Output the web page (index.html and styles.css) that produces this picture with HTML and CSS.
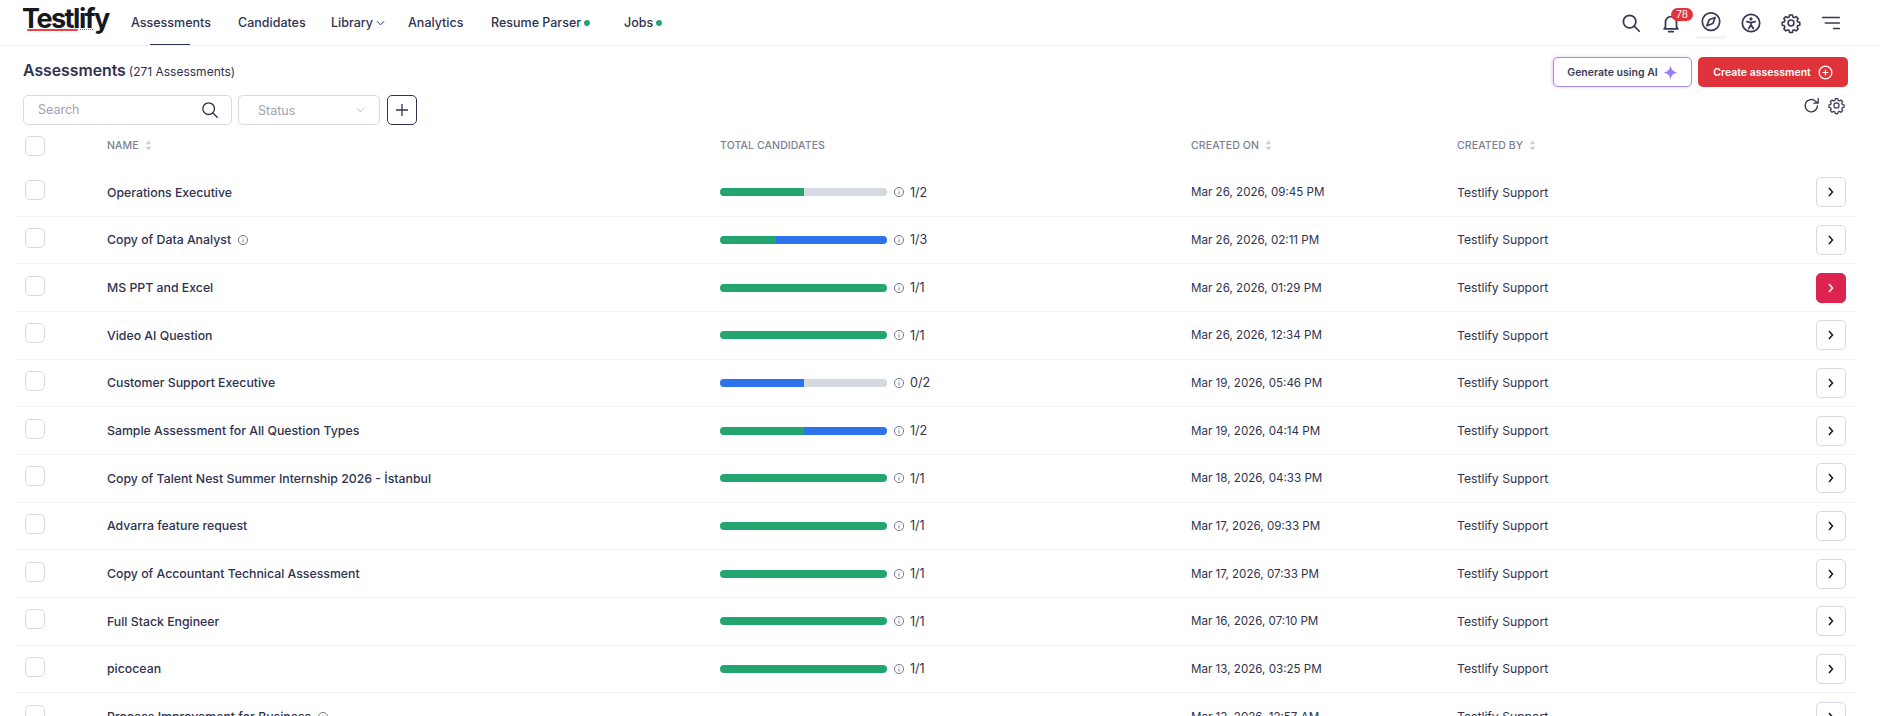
FILE: index.html
```html
<!DOCTYPE html>
<html lang="en">
<head>
<meta charset="utf-8">
<title>Testlify - Assessments</title>
<link rel="stylesheet" href="styles.css">
</head>
<body>
<header class="topbar">
  <div class="logo"><span class="logo-word">Testlify</span><span class="logo-line"></span><span class="logo-dots"></span></div>
  <nav class="nav">
    <a class="nav-item n1 active">Assessments</a>
    <a class="nav-item n2">Candidates</a>
    <a class="nav-item n3">Library <svg class="chev" viewBox="0 0 10 6"><path d="M1 1l4 4 4-4"/></svg></a>
    <a class="nav-item n4">Analytics</a>
    <a class="nav-item n5">Resume Parser <i class="dot"></i></a>
    <a class="nav-item n6">Jobs <i class="dot"></i></a>
  </nav>
  <div class="top-icons">
    <svg class="ti" viewBox="0 0 24 24"><circle cx="10.5" cy="10.5" r="6.8"/><path d="M15.5 15.5L21 21"/></svg>
    <span class="bell-wrap">
      <svg class="ti" viewBox="0 0 24 24"><path d="M6 16.500V11a6 6 0 0 1 12 0v5.500l1.500 2h-15z"/><path d="M9.500 21.500h5"/></svg>
      <span class="badge">78</span>
    </span>
    <span class="compass-wrap">
      <svg class="ti" viewBox="0 0 24 24"><circle cx="12" cy="10.500" r="9.500"/><path d="M16.500 6l-2.500 6.500-6.500 2.500 2.500-6.500z"/></svg>
    </span>
    <svg class="ti" viewBox="0 0 24 24"><circle cx="12" cy="12" r="9.500"/><circle cx="12" cy="7.500" r=".8" class="fill"/><path d="M7.500 10.500l4.500 1 4.500-1M12 11.500V14l-2.500 4M12 14l2.500 4"/></svg>
    <svg class="ti" viewBox="0 0 24 24"><use href="#gear"/></svg>
    <svg class="ti" viewBox="0 0 24 24"><path d="M3 6h18M6 12h15M15 18h6"/></svg>
  </div>
</header>

<svg class="defs" aria-hidden="true"><defs>
  <path id="gear" d="M10.300 3h3.400l.5 2.400 1.800.8 2.100-1.300 2.400 2.400-1.300 2.100.8 1.800 2.400.5v3.400l-2.400.5-.8 1.800 1.300 2.100-2.400 2.400-2.100-1.300-1.800.8-.5 2.400h-3.400l-.5-2.400-1.800-.8-2.100 1.300-2.400-2.400 1.300-2.100-.8-1.800-2.400-.5v-3.400l2.400-.5.800-1.800-1.300-2.100 2.400-2.400 2.100 1.300 1.800-.8zM12 9a3.500 3.500 0 1 0 0 7 3.500 3.500 0 0 0 0-7z" transform="translate(12 12) scale(.92) translate(-12 -12.500)"/>
  <g id="info"><circle cx="6" cy="6" r="4.600"/><path d="M6 5.500v3M6 3.400v.8"/></g>
</defs></svg>

<main class="page">
  <section class="title-row">
    <h1 class="title">Assessments <span class="count">(271 Assessments)</span></h1>
    <div class="actions">
      <button class="btn-ai">Generate using AI
        <svg class="spark" viewBox="0 0 16 16"><path d="M8 .5c.9 4.500 2.600 6.500 7.500 7.500-4.900 1-6.600 3-7.500 7.500C7.100 11 5.400 9 .5 8 5.400 7 7.100 5 8 .5z"/></svg>
      </button>
      <button class="btn-create">Create assessment
        <svg class="plus-c" viewBox="0 0 16 16"><circle cx="8" cy="8" r="6.800"/><path d="M8 4.800v6.400M4.800 8h6.400"/></svg>
      </button>
    </div>
  </section>

  <section class="toolbar">
    <div class="filters">
      <label class="search"><span class="ph ph-up">Search</span>
        <svg class="search-ic" viewBox="0 0 20 20"><circle cx="8.500" cy="8.500" r="6.500"/><path d="M13.300 13.300L18.500 18.500"/></svg>
      </label>
      <div class="status"><span class="ph">Status</span>
        <svg class="status-chev" viewBox="0 0 10 6"><path d="M1 1l4 4 4-4"/></svg>
      </div>
      <button class="add"><svg viewBox="0 0 16 16"><path d="M8 2v12M2 8h12"/></svg></button>
    </div>
    <div class="tools">
      <svg class="tool" viewBox="0 0 24 24"><path d="M19.500 12.500A7.800 7.800 0 1 1 17 6.500L20 9M20.500 3.500V9H15"/></svg>
      <svg class="tool" viewBox="0 0 24 24"><use href="#gear"/></svg>
    </div>
  </section>

  <section class="table">
    <div class="row head">
      <span class="check"></span>
      <span class="th">NAME <svg class="sort" viewBox="0 0 8 12"><path d="M4 0l3.500 4.500h-7zM4 12L.500 7.500h7z"/></svg></span>
      <span class="th">TOTAL CANDIDATES</span>
      <span class="th">CREATED ON <svg class="sort" viewBox="0 0 8 12"><path d="M4 0l3.500 4.500h-7zM4 12L.500 7.500h7z"/></svg></span>
      <span class="th">CREATED BY <svg class="sort" viewBox="0 0 8 12"><path d="M4 0l3.500 4.500h-7zM4 12L.500 7.500h7z"/></svg></span>
      <span></span>
    </div>

    <div class="row">
      <span class="check"></span><span class="name">Operations Executive</span>
      <span class="cand"><span class="bar"><i class="g w50"></i><i class="e"></i></span><svg class="info" viewBox="0 0 12 12"><use href="#info"/></svg><span>1/2</span></span>
      <span class="cell date">Mar 26, 2026, 09:45 PM</span><span class="cell">Testlify Support</span>
      <button class="go"><svg viewBox="0 0 8 10"><path d="M2 1l3.500 4L2 9"/></svg></button>
    </div>
    <div class="row">
      <span class="check"></span><span class="name">Copy of Data Analyst <svg class="info" viewBox="0 0 12 12"><use href="#info"/></svg></span>
      <span class="cand"><span class="bar"><i class="g w33"></i><i class="b"></i></span><svg class="info" viewBox="0 0 12 12"><use href="#info"/></svg><span>1/3</span></span>
      <span class="cell date">Mar 26, 2026, 02:11 PM</span><span class="cell">Testlify Support</span>
      <button class="go"><svg viewBox="0 0 8 10"><path d="M2 1l3.500 4L2 9"/></svg></button>
    </div>
    <div class="row">
      <span class="check"></span><span class="name">MS PPT and Excel</span>
      <span class="cand"><span class="bar"><i class="g w100"></i></span><svg class="info" viewBox="0 0 12 12"><use href="#info"/></svg><span>1/1</span></span>
      <span class="cell date">Mar 26, 2026, 01:29 PM</span><span class="cell">Testlify Support</span>
      <button class="go hot"><svg viewBox="0 0 8 10"><path d="M2 1l3.500 4L2 9"/></svg></button>
    </div>
    <div class="row">
      <span class="check"></span><span class="name">Video AI Question</span>
      <span class="cand"><span class="bar"><i class="g w100"></i></span><svg class="info" viewBox="0 0 12 12"><use href="#info"/></svg><span>1/1</span></span>
      <span class="cell date">Mar 26, 2026, 12:34 PM</span><span class="cell">Testlify Support</span>
      <button class="go"><svg viewBox="0 0 8 10"><path d="M2 1l3.500 4L2 9"/></svg></button>
    </div>
    <div class="row">
      <span class="check"></span><span class="name">Customer Support Executive</span>
      <span class="cand"><span class="bar"><i class="b w50"></i><i class="e"></i></span><svg class="info" viewBox="0 0 12 12"><use href="#info"/></svg><span>0/2</span></span>
      <span class="cell date">Mar 19, 2026, 05:46 PM</span><span class="cell">Testlify Support</span>
      <button class="go"><svg viewBox="0 0 8 10"><path d="M2 1l3.500 4L2 9"/></svg></button>
    </div>
    <div class="row">
      <span class="check"></span><span class="name">Sample Assessment for All Question Types</span>
      <span class="cand"><span class="bar"><i class="g w50"></i><i class="b"></i></span><svg class="info" viewBox="0 0 12 12"><use href="#info"/></svg><span>1/2</span></span>
      <span class="cell date">Mar 19, 2026, 04:14 PM</span><span class="cell">Testlify Support</span>
      <button class="go"><svg viewBox="0 0 8 10"><path d="M2 1l3.500 4L2 9"/></svg></button>
    </div>
    <div class="row">
      <span class="check"></span><span class="name">Copy of Talent Nest Summer Internship 2026 - İstanbul</span>
      <span class="cand"><span class="bar"><i class="g w100"></i></span><svg class="info" viewBox="0 0 12 12"><use href="#info"/></svg><span>1/1</span></span>
      <span class="cell date">Mar 18, 2026, 04:33 PM</span><span class="cell">Testlify Support</span>
      <button class="go"><svg viewBox="0 0 8 10"><path d="M2 1l3.500 4L2 9"/></svg></button>
    </div>
    <div class="row">
      <span class="check"></span><span class="name">Advarra feature request</span>
      <span class="cand"><span class="bar"><i class="g w100"></i></span><svg class="info" viewBox="0 0 12 12"><use href="#info"/></svg><span>1/1</span></span>
      <span class="cell date">Mar 17, 2026, 09:33 PM</span><span class="cell">Testlify Support</span>
      <button class="go"><svg viewBox="0 0 8 10"><path d="M2 1l3.500 4L2 9"/></svg></button>
    </div>
    <div class="row">
      <span class="check"></span><span class="name">Copy of Accountant Technical Assessment</span>
      <span class="cand"><span class="bar"><i class="g w100"></i></span><svg class="info" viewBox="0 0 12 12"><use href="#info"/></svg><span>1/1</span></span>
      <span class="cell date">Mar 17, 2026, 07:33 PM</span><span class="cell">Testlify Support</span>
      <button class="go"><svg viewBox="0 0 8 10"><path d="M2 1l3.500 4L2 9"/></svg></button>
    </div>
    <div class="row">
      <span class="check"></span><span class="name">Full Stack Engineer</span>
      <span class="cand"><span class="bar"><i class="g w100"></i></span><svg class="info" viewBox="0 0 12 12"><use href="#info"/></svg><span>1/1</span></span>
      <span class="cell date">Mar 16, 2026, 07:10 PM</span><span class="cell">Testlify Support</span>
      <button class="go"><svg viewBox="0 0 8 10"><path d="M2 1l3.500 4L2 9"/></svg></button>
    </div>
    <div class="row">
      <span class="check"></span><span class="name">picocean</span>
      <span class="cand"><span class="bar"><i class="g w100"></i></span><svg class="info" viewBox="0 0 12 12"><use href="#info"/></svg><span>1/1</span></span>
      <span class="cell date">Mar 13, 2026, 03:25 PM</span><span class="cell">Testlify Support</span>
      <button class="go"><svg viewBox="0 0 8 10"><path d="M2 1l3.500 4L2 9"/></svg></button>
    </div>
    <div class="row">
      <span class="check"></span><span class="name">Process Improvement for Business <svg class="info" viewBox="0 0 12 12"><use href="#info"/></svg></span>
      <span class="cand"><span>-</span></span>
      <span class="cell date">Mar 13, 2026, 12:57 AM</span><span class="cell">Testlify Support</span>
      <button class="go"><svg viewBox="0 0 8 10"><path d="M2 1l3.500 4L2 9"/></svg></button>
    </div>
  </section>
</main>
</body>
</html>
```
FILE: styles.css
```css
* { box-sizing: border-box; }
html, body { margin: 0; height: 716px; overflow: hidden; background: #fff; }
body { font-family: Inter, "Noto Sans", sans-serif; color: #2f3250; font-size: 13px; }
svg { display: block; fill: none; stroke: currentColor; }
.defs { position: absolute; width: 0; height: 0; }

.topbar { height: 46px; border-bottom: 1px solid #f0f1f4; display: flex; align-items: center; padding: 0 38px 0 22px; }
.logo { width: 109px; position: relative; height: 32px; flex: none; }
.logo-word { display: block; font: 700 27px/24px Inter, sans-serif; letter-spacing: -1.500px; color: #16181f; }
.logo-line { position: absolute; left: 5px; top: 22px; width: 51px; height: 2px; background: #ef4046; border-radius: 1px; }
.logo-dots { position: absolute; left: 58px; top: 22.500px; width: 13px; height: 1px; border-top: 1px dotted #ef4046; }
.nav { display: flex; height: 45px; flex: 1; }
.nav-item { display: flex; align-items: center; gap: 3px; font-weight: 500; font-size: 12.5px; position: relative; color: #2f3250; }
.n1 { width: 107px; } .n2 { width: 93px; } .n3 { width: 77px; } .n4 { width: 83px; } .n5 { width: 133px; }
.active::after { content: ""; position: absolute; left: 19px; bottom: 0; width: 40px; height: 1px; background: #2f3250; }
.chev { width: 9px; height: 6px; stroke-width: 1.100; }
.dot { width: 6px; height: 6px; border-radius: 50%; background: #1fa971; margin-left: 0; }
.top-icons { display: flex; align-items: center; gap: 18px; }
.ti { width: 22px; height: 22px; stroke: #363a52; stroke-width: 1.900; stroke-linecap: round; stroke-linejoin: round; }
.ti .fill { fill: #363a52; }
.bell-wrap, .compass-wrap { position: relative; display: block; }
.badge { position: absolute; left: 11px; top: -4px; width: 22px; height: 13px; border-radius: 7px; background: #e2323a; color: #fff; font-size: 10px; line-height: 13px; text-align: center; }
.compass-wrap::after { content: ""; position: absolute; left: -4px; top: 24px; width: 30px; height: 3px; border-radius: 2px; background: #f3f5f9; }

.page { padding: 0 24px 0 15px; }
.title-row { display: flex; justify-content: space-between; align-items: flex-start; height: 41px; padding: 11px 8px 0; }
.title { margin: 0; font-size: 15.800px; font-weight: 600; line-height: 28px; color: #2f3250; }
.count { font-size: 12px; font-weight: 400; margin-left: -1px; }
.actions { display: flex; gap: 6px; }
.btn-ai, .btn-create { height: 30px; border-radius: 5px; display: flex; align-items: center; justify-content: center; font: 600 10.5px Inter, sans-serif; }
.btn-ai { width: 139px; gap: 5px; background: #fff; color: #3a3d55; border: 1.5px solid #a78bfa; box-shadow: -1px 0 3px rgba(217,140,240,.5); }
.spark { width: 15px; height: 15px; fill: #9b7bf2; stroke: none; }
.btn-create { width: 150px; gap: 7px; background: #e0323a; color: #fff; border: 0; }
.plus-c { width: 15px; height: 15px; stroke-width: 1.300; }

.toolbar { display: flex; justify-content: space-between; height: 31px; margin-top: 8px; padding: 0 10px 0 8px; }
.filters { display: flex; gap: 6px; }
.search, .status { height: 30px; border: 1px solid #d9dbe3; border-radius: 5px; display: flex; align-items: center; justify-content: space-between; }
.search { width: 209px; padding: 0 12px 0 14px; }
.status { width: 142px; padding: 0 14px 0 19px; }
.ph { color: #9ea3b3; font-size: 12.500px; }
.ph-up { margin-bottom: 2px; }
.search-ic { width: 18px; height: 18px; stroke: #2f3250; stroke-width: 1.500; }
.status-chev { width: 9px; height: 6px; stroke: #a9adba; stroke-width: 1; }
.add { width: 30px; height: 30px; margin-left: 1px; padding: 0; border: 1px solid #2f3250; border-radius: 5px; background: #fff; display: flex; align-items: center; justify-content: center; color: #2f3250; }
.add svg { width: 16px; height: 16px; stroke-width: 1.300; }
.tools { display: flex; gap: 6px; padding-top: 1px; }
.tool { width: 19px; height: 19px; stroke: #363a52; stroke-width: 1.700; stroke-linejoin: round; stroke-linecap: round; }

.row { display: grid; grid-template-columns: 82px 613px 471px 266px 1fr 30px; align-items: center; height: 47.67px; border-bottom: 1px solid #f1f2f5; padding: 0 10px; }
.row.head { height: 43px; border-bottom: 0; padding-bottom: 4px; }
.check { width: 20px; height: 20px; margin-bottom: 4px; border: 1px solid #d7dae2; border-radius: 5px; background: #fff; }
.head .check { margin-bottom: 0; }
.th { display: flex; align-items: center; gap: 6px; font-size: 10.500px; font-weight: 500; color: #7b7f93; letter-spacing: .1px; }
.sort { width: 7px; height: 11px; fill: #cfd2da; stroke: none; }
.name { display: flex; align-items: center; gap: 6px; font-size: 12.300px; font-weight: 450; color: #2f3250; }
.cell { font-size: 12.200px; color: #2f3250; }
.date { font-size: 11.600px; }
.cand { display: flex; align-items: center; font-size: 12.500px; }
.bar { width: 167px; height: 8px; border-radius: 4px; overflow: hidden; display: flex; background: #d5d9e0; }
.bar i { display: block; flex: 1; }
.bar .w50 { flex: 0 0 50%; } .bar .w33 { flex: 0 0 33.33%; } .bar .w100 { flex: 0 0 100%; }
.g { background: #23a56f; } .b { background: #2e72ee; } .e { background: #d5d9e0; }
.info { width: 12px; height: 12px; stroke: #6d7083; stroke-width: .9; flex: none; }
.cand .info { margin: 0 5px 0 6px; }
.go { width: 30px; height: 30px; padding: 0; border: 1px solid #d7dae2; border-radius: 5px; background: #fff; display: flex; align-items: center; justify-content: center; color: #15161c; }
.go svg { width: 8px; height: 10px; stroke-width: 1.500; }
.go.hot { background: #dc2450; border-color: #dc2450; color: #fff; }
```
